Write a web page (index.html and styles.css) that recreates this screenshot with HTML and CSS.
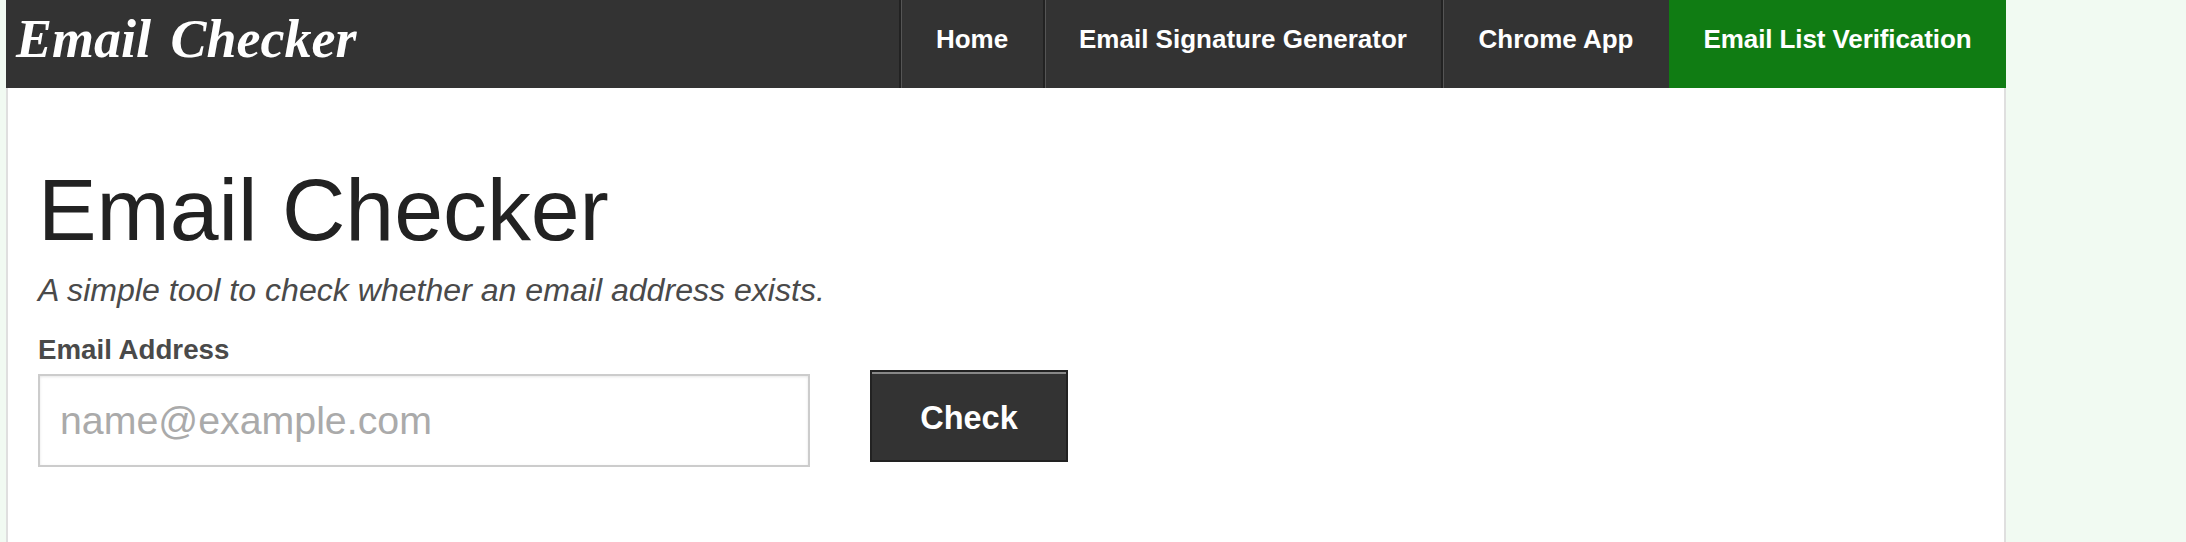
FILE: index.html
```html
<!DOCTYPE html>
<html lang="en">
<head>
    <meta charset="UTF-8">
    <meta name="viewport" content="width=device-width, initial-scale=1.0">
    <title>Email Checker</title>
    <link rel="stylesheet" href="styles.css">
</head>
<body>
    <div class="container">
        <div class="header">
            <a class="logo" href="#">Email Checker</a>
            <ul class="nav">
                <li class="nav-home"><a href="#">Home</a></li>
                <li class="nav-signature"><a href="#">Email Signature Generator</a></li>
                <li class="nav-chrome"><a href="#">Chrome App</a></li>
                <li class="nav-green"><a href="#">Email List Verification</a></li>
            </ul>
        </div>
        <div class="content">
            <h1>Email Checker</h1>
            <p class="intro">A simple tool to check whether an email address exists.</p>
            <form class="check-form">
                <div class="field">
                    <label for="email">Email Address</label>
                    <input type="text" id="email" placeholder="name@example.com">
                </div>
                <button type="button" class="btn">Check</button>
            </form>
        </div>
    </div>
</body>
</html>
```

FILE: styles.css
```css
* {
    box-sizing: border-box;
    margin: 0;
    padding: 0;
}
html, body {
    height: 100%;
    overflow: hidden;
}
body {
    font-family: "Liberation Sans", Arial, sans-serif;
    background-color: #f1faf2;
}
.container {
    width: 2000px;
    height: 100%;
    margin-left: 6px;
    background: #fff;
    border-left: 2px solid #dfdfdf;
    border-right: 2px solid #dfdfdf;
}
.header {
    display: flex;
    justify-content: space-between;
    height: 88px;
    margin: 0 -2px;
    background: #333;
}
.logo {
    padding: 8px 0 0 10px;
    font-family: "Liberation Serif", serif;
    font-size: 54px;
    font-style: italic;
    font-weight: bold;
    line-height: 62px;
    word-spacing: 6px;
    color: #fff;
    text-decoration: none;
}
.nav {
    display: flex;
    list-style: none;
}
.nav li {
    border-left: 2px solid #222;
    box-shadow: inset 1px 0 0 #555;
}
.nav a {
    display: block;
    font-size: 26px;
    font-weight: bold;
    line-height: 78px;
    text-align: center;
    white-space: nowrap;
    color: #fff;
    text-decoration: none;
}
.nav .nav-home {
    width: 144px;
}
.nav .nav-signature {
    width: 398px;
}
.nav .nav-chrome {
    width: 228px;
}
.nav .nav-green {
    width: 337px;
    background: #107c13;
    border-left: 0;
    box-shadow: none;
}
.nav .nav-green a {
    letter-spacing: -0.1px;
}
.content {
    padding: 72px 0 0 30px;
}
h1 {
    font-size: 87.8px;
    font-weight: normal;
    line-height: 100px;
    color: #222;
}
.intro {
    margin-top: 10px;
    font-size: 32.1px;
    font-style: italic;
    line-height: 40px;
    color: #4a4a4a;
}
.check-form {
    display: flex;
    align-items: flex-start;
    gap: 60px;
    margin-top: 22px;
}
.field label {
    display: block;
    margin-bottom: 6px;
    font-size: 27.7px;
    font-weight: bold;
    line-height: 36px;
    color: #4a4a4a;
}
.field input {
    display: block;
    width: 772px;
    height: 93px;
    padding: 0 20px;
    border: 2px solid #ccc;
    box-shadow: inset 0 1px 3px rgba(0, 0, 0, 0.1);
    font-family: inherit;
    font-size: 39.3px;
    outline: none;
}
.field input::placeholder {
    color: #aaa;
}
.btn {
    width: 198px;
    height: 92px;
    margin-top: 38px;
    padding-top: 4px;
    border: 2px solid #222;
    background: #333;
    box-shadow: inset 0 2px 0 #888;
    font-family: inherit;
    font-size: 32.5px;
    font-weight: bold;
    color: #fff;
    cursor: pointer;
}
```
